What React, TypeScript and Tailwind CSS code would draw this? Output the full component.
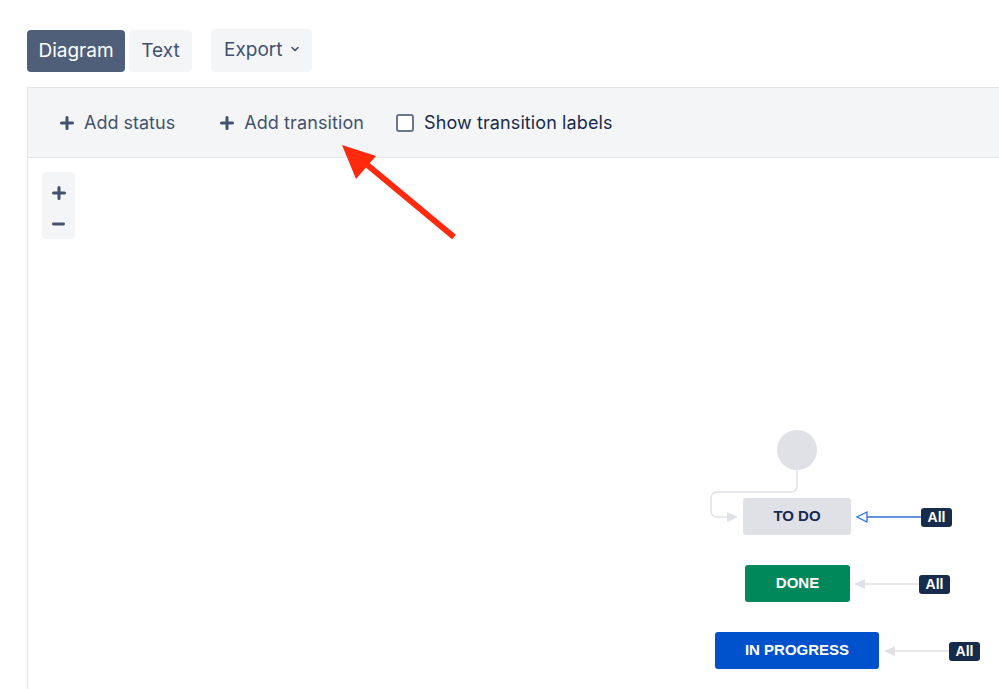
import { ChevronDown } from "lucide-react";

const ui = { fontFamily: "Inter, 'Liberation Sans', sans-serif" };
const node = { fontFamily: "'Liberation Sans', Arial, sans-serif" };

function Plus({ className = "" }: { className?: string }) {
  return (
    <svg viewBox="0 0 14 14" className={className}>
      <path d="M7 1.5v11M1.5 7h11" stroke="currentColor" strokeWidth="3" strokeLinecap="round" />
    </svg>
  );
}

function AllBadge({ left, top }: { left: number; top: number }) {
  return (
    <div
      className="absolute flex h-[19px] w-[31px] items-center justify-center rounded-[3px] bg-[#172b4d] text-[14px] font-bold text-white"
      style={{ left, top, ...node }}
    >
      All
    </div>
  );
}

export default function App() {
  return (
    <div className="relative h-[689px] w-[999px] overflow-hidden bg-white" style={ui}>
      <div className="flex items-center pl-[27px] pt-[28px]">
        <button className="mt-[2px] h-[42px] w-[98px] rounded-[4px] bg-[#505f79] text-[19px] text-white">Diagram</button>
        <button className="ml-[4px] mt-[2px] h-[42px] w-[63px] rounded-[4px] bg-[#f4f5f7] text-[19px] text-[#42526e]">Text</button>
        <button className="ml-[19px] flex h-[43px] w-[101px] items-center gap-[7px] rounded-[4px] bg-[#f4f5f7] pl-[13px] text-[19px] text-[#42526e]">
          Export
          <ChevronDown className="mb-[3px] h-[12px] w-[12px]" strokeWidth={3.2} />
        </button>
      </div>

      <div className="ml-[27px] mt-[15px] flex h-[603px] flex-col border-l border-[#e4e5e9]">
        <div className="flex h-[71px] items-center border-y border-[#e4e5e9] bg-[#f4f5f7] text-[18px]">
          <div className="ml-[32px] flex items-center text-[#42526e]">
            <Plus className="h-[14px] w-[14px]" />
            <span className="ml-[10px]">Add status</span>
          </div>
          <div className="ml-[45px] flex items-center text-[#42526e]">
            <Plus className="h-[14px] w-[14px]" />
            <span className="ml-[10px] tracking-[0.1px]">Add transition</span>
          </div>
          <div className="ml-[32px] flex items-center text-[#172b4d]">
            <span className="h-[18px] w-[18px] rounded-[3px] border-2 border-[#6b778c] bg-white" />
            <span className="ml-[10px] tracking-[0.1px]">Show transition labels</span>
          </div>
        </div>
        <div className="pl-[14px] pt-[14px]">
          <div className="flex h-[67px] w-[33px] flex-col items-center justify-center gap-[22px] rounded-[4px] bg-[#f4f5f7] text-[#42526e]">
            <Plus className="h-[14px] w-[14px]" />
            <svg viewBox="0 0 14 4" className="h-[4px] w-[13px]">
              <path d="M1.5 2h11" stroke="currentColor" strokeWidth="3" strokeLinecap="round" />
            </svg>
          </div>
        </div>
      </div>

      <svg className="pointer-events-none absolute left-0 top-0" width="999" height="689">
        {/* start connector */}
        <path d="M797 470 V486 a6 6 0 0 1 -6 6 H717 a6 6 0 0 0 -6 6 V511 a6 6 0 0 0 6 6 H728" fill="none" stroke="#dfe1e6" strokeWidth="1.5" />
        <path d="M727 512 L738 517 L727 522 Z" fill="#dfe1e6" />
        {/* to do */}
        <path d="M921 517 H866" stroke="#2f6fd0" strokeWidth="1.5" />
        <path d="M867 512 L857 517 L867 522 Z" fill="white" stroke="#2f6fd0" strokeWidth="1.3" />
        {/* done */}
        <path d="M919 584 H864" stroke="#dfe1e6" strokeWidth="1.5" />
        <path d="M865 579 L854 584 L865 589 Z" fill="#dfe1e6" />
        {/* in progress */}
        <path d="M949 651 H894" stroke="#dfe1e6" strokeWidth="1.5" />
        <path d="M895 646 L884 651 L895 656 Z" fill="#dfe1e6" />
        {/* red arrow */}
        <path d="M454 237 L365 163" stroke="#ff2a0d" strokeWidth="6" strokeLinecap="butt" />
        <path d="M342 145 L376 156 L356 179 Z" fill="#ff2a0d" />
      </svg>

      <div className="absolute left-[777px] top-[430px] h-[40px] w-[40px] rounded-full bg-[#dfe1e6]" />
      <div
        className="absolute left-[743px] top-[498px] flex h-[37px] w-[108px] items-center justify-center rounded-[3px] bg-[#dfe1e6] text-[15px] font-bold text-[#172b4d]"
        style={node}
      >
        TO DO
      </div>
      <AllBadge left={921} top={508} />
      <div
        className="absolute left-[745px] top-[565px] flex h-[37px] w-[105px] items-center justify-center rounded-[3px] bg-[#00875a] text-[15px] font-bold text-white"
        style={node}
      >
        DONE
      </div>
      <AllBadge left={919} top={575} />
      <div
        className="absolute left-[715px] top-[632px] flex h-[37px] w-[164px] items-center justify-center rounded-[3px] bg-[#0052cc] text-[15px] font-bold text-white"
        style={node}
      >
        IN PROGRESS
      </div>
      <AllBadge left={949} top={642} />
    </div>
  );
}
